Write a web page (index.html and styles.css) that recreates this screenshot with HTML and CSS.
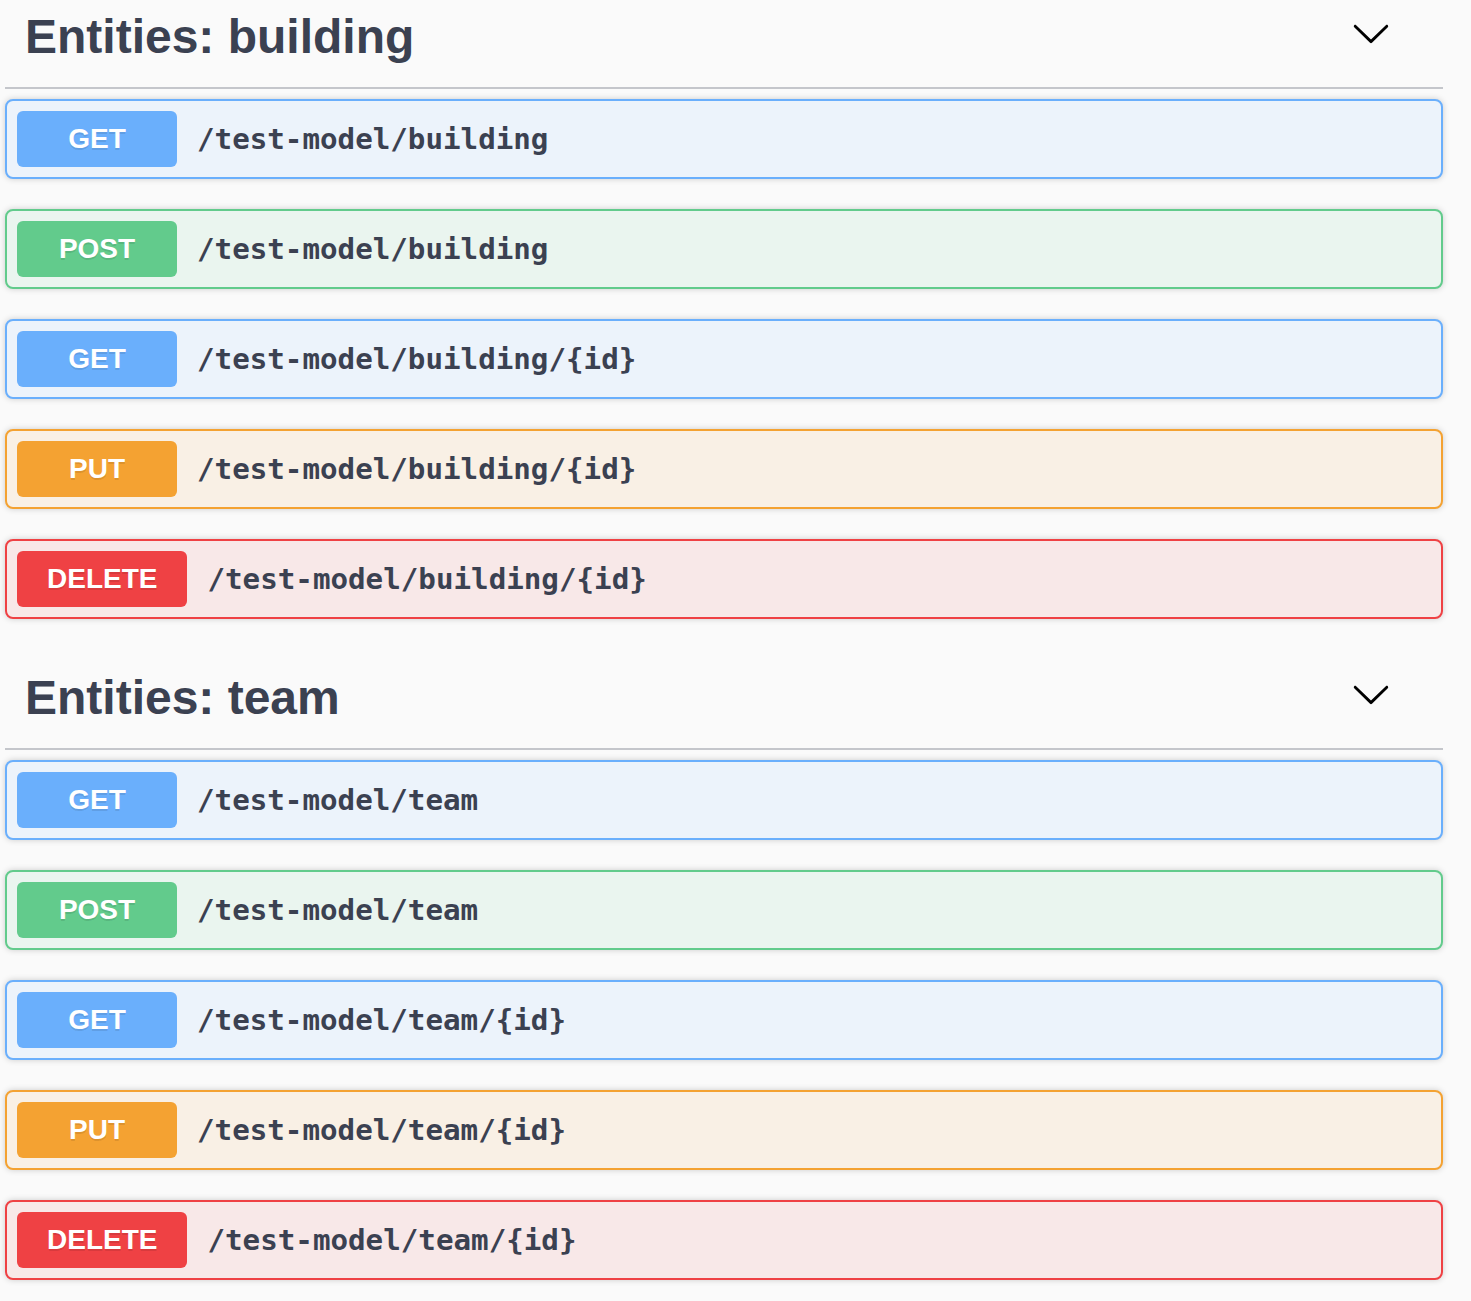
FILE: index.html
```html
<!DOCTYPE html>
<html>
<head>
<meta charset="utf-8">
<link rel="stylesheet" href="styles.css">
</head>
<body>
<div class="wrapper">
  <section class="tag-section">
    <h3 class="tag">
      <span class="tag-name">Entities: building</span>
      <button class="expand" aria-label="collapse">
        <svg width="40" height="40" viewBox="0 0 20 20"><path d="M17.418 6.109c.272-.268.709-.268.979 0s.271.701 0 .969l-7.908 7.83c-.27.268-.707.268-.979 0l-7.908-7.83c-.27-.268-.27-.701 0-.969.271-.268.709-.268.979 0L10 13.25l7.418-7.141z"/></svg>
      </button>
    </h3>
    <div class="op op-get"><span class="method">GET</span><span class="path">/test-model/building</span></div>
    <div class="op op-post"><span class="method">POST</span><span class="path">/test-model/building</span></div>
    <div class="op op-get"><span class="method">GET</span><span class="path">/test-model/building/{id}</span></div>
    <div class="op op-put"><span class="method">PUT</span><span class="path">/test-model/building/{id}</span></div>
    <div class="op op-delete"><span class="method">DELETE</span><span class="path">/test-model/building/{id}</span></div>
  </section>
  <section class="tag-section">
    <h3 class="tag">
      <span class="tag-name">Entities: team</span>
      <button class="expand" aria-label="collapse">
        <svg width="40" height="40" viewBox="0 0 20 20"><path d="M17.418 6.109c.272-.268.709-.268.979 0s.271.701 0 .969l-7.908 7.83c-.27.268-.707.268-.979 0l-7.908-7.83c-.27-.268-.27-.701 0-.969.271-.268.709-.268.979 0L10 13.25l7.418-7.141z"/></svg>
      </button>
    </h3>
    <div class="op op-get"><span class="method">GET</span><span class="path">/test-model/team</span></div>
    <div class="op op-post"><span class="method">POST</span><span class="path">/test-model/team</span></div>
    <div class="op op-get"><span class="method">GET</span><span class="path">/test-model/team/{id}</span></div>
    <div class="op op-put"><span class="method">PUT</span><span class="path">/test-model/team/{id}</span></div>
    <div class="op op-delete"><span class="method">DELETE</span><span class="path">/test-model/team/{id}</span></div>
  </section>
</div>
</body>
</html>
```
FILE: styles.css
```css
html, body {
  margin: 0;
  padding: 0;
  background: #fafafa;
}
body {
  font-family: "Liberation Sans", Arial, sans-serif;
  color: #3b4151;
  overflow: hidden;
}
.wrapper {
  width: 1438px;
  margin-left: 5px;
  margin-top: -8px;
}
.tag-section {
  display: flex;
  flex-direction: column;
  margin-bottom: 4px;
}
.tag {
  display: flex;
  align-items: flex-start;
  margin: 0 0 10px;
  padding: 17px 52px 23px 20px;
  border-bottom: 2px solid #c4c6cb;
  font-size: 48px;
  font-weight: 700;
  line-height: 55px;
  color: #3b4151;
}
.tag-name {
  flex: 1;
}
.expand {
  border: none;
  background: none;
  padding: 0;
  margin-top: 4px;
  width: 40px;
  height: 40px;
  display: flex;
}
.expand svg {
  fill: #000;
}
.op {
  display: flex;
  align-items: center;
  height: 80px;
  box-sizing: border-box;
  margin-bottom: 30px;
  padding: 10px;
  border: 2px solid;
  border-radius: 8px;
  box-shadow: 0 0 6px rgba(0, 0, 0, 0.19);
}
.method {
  box-sizing: border-box;
  min-width: 160px;
  height: 56px;
  padding: 0 30px;
  border-radius: 6px;
  display: flex;
  align-items: center;
  justify-content: center;
  font-family: "Liberation Sans", Arial, sans-serif;
  font-size: 28px;
  font-weight: 700;
  color: #fff;
  text-shadow: 0 2px 0 rgba(0, 0, 0, 0.1);
}
.path {
  padding: 0 20px;
  font-family: "DejaVu Sans Mono", monospace;
  font-size: 29.2px;
  font-weight: 700;
  color: #3b4151;
}
.op-get { border-color: #6aaffc; background: #ecf3fb; }
.op-get .method { background: #6aaffc; }
.op-post { border-color: #62cb8c; background: #eaf5ef; }
.op-post .method { background: #62cb8c; }
.op-put { border-color: #f4a232; background: #f9f0e5; }
.op-put .method { background: #f4a232; }
.op-delete { border-color: #ef4144; background: #f8e8e8; }
.op-delete .method { background: #ef4144; }
```
